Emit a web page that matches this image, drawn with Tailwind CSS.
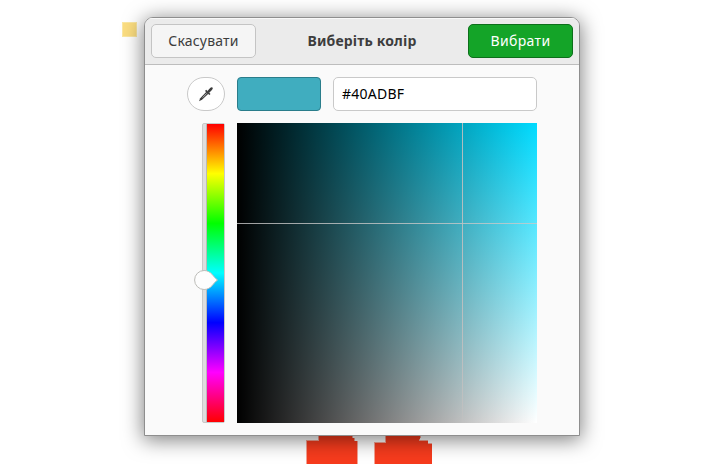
<!DOCTYPE html>
<html lang="uk">
<head>
<meta charset="utf-8">
<title>Виберіть колір</title>
<script src="https://cdn.jsdelivr.net/npm/@tailwindcss/browser@4"></script>
</head>
<body class="relative h-[464px] w-[721px] overflow-hidden bg-white font-['Noto_Sans','Open_Sans',sans-serif] text-[14px]">
  <!-- canvas artwork behind the dialog -->
  <svg class="absolute inset-0" width="721" height="464" shape-rendering="crispEdges">
    <rect x="122" y="22" width="15" height="15" fill="#fbe7a2"/>
    <rect x="123" y="23" width="13" height="13" fill="#fbdd80"/>
    <path d="M306 464V440H318V430H353V438H355V441H358V464ZM374 464V442H385V430H421V438H420V440H428V443H432V464Z" fill="#f5a394"/>
    <path d="M307 464V441H319V430H352V438H354V441H357V464ZM375 464V443H386V430H420V439H419V441H428V444H432V464Z" fill="#f63b1d"/>
  </svg>

  <main class="absolute top-[17px] left-[144px] flex h-[419px] w-[436px] flex-col overflow-hidden rounded-t-[9px] border border-[#8e8e8e] bg-[#fafafa] shadow-[0_3px_20px_1px_rgba(0,0,0,0.5)]">
    <header class="flex h-[47px] shrink-0 items-center justify-between border-b border-[#bdbdbd] bg-[#ebebeb] px-[6px] shadow-[inset_0_1px_0_#f8f8f8]">
      <button class="h-[34px] w-[105px] rounded-[5px] border border-[#c4c4c4] bg-[#f5f5f5] pb-px leading-5 tracking-[0.2px] text-[#3d3d3d]"><span class="whitespace-nowrap">Скасувати</span></button>
      <h1 class="pb-px font-bold tracking-[0.15px] whitespace-nowrap text-[#3d3d3d]">Виберіть колір</h1>
      <button class="h-[34px] w-[105px] rounded-[5px] border border-[#0d6f1b] bg-[#14a428] pb-px leading-5 tracking-[0.35px] text-white"><span class="whitespace-nowrap">Вибрати</span></button>
    </header>

    <div class="flex flex-col gap-3 pt-3 pl-[42px]">
      <div class="flex h-[34px] gap-3">
        <button class="flex w-[38px] items-center justify-center rounded-full border border-[#c9c9c9] bg-white">
          <svg width="16" height="16" viewBox="0 0 16 16">
            <path d="M1 15.2 2.2 12.3 8.4 5.7 10.4 7.7 4 13.7Z" fill="#3d3d3d"/>
            <path d="M4.6 11.6 8.8 7.3" stroke="#c8c8c8" stroke-width=".8"/>
            <path d="M7.6 4.3 11.9 8.5" stroke="#3d3d3d" stroke-width="1.7"/>
            <path d="M9.2 5.2 11.7 2.4Q13.4.6 14.5 1.4 15.5 2.5 13.7 4.2L11 6.9Z" fill="#3d3d3d"/>
          </svg>
        </button>
        <div class="w-[84px] rounded-[4px] border border-[#2a7d8b] bg-[#40adbf]"></div>
        <div class="flex w-[204px] items-center rounded-[5px] border border-[#c9c9c9] bg-white pb-px pl-2 tracking-[0.25px] text-black">#40ADBF</div>
      </div>

      <div class="flex gap-3 pl-[15px]">
        <div class="relative flex h-[300px] w-[23px] rounded-[2px] border border-[#c9c9c9] bg-[#dedede]">
          <div class="ml-[3px] flex-1 border-l border-[#b9b9b9] bg-[linear-gradient(to_bottom,#f00,#ff0_16.667%,#0f0_33.333%,#0ff_50%,#00f_66.667%,#f0f_83.333%,#f00)]"></div>
          <svg class="absolute top-[144px] left-[-10px]" width="26" height="23" viewBox="0 0 26 23">
            <path d="M24.5 12C20.5 9.5 18.5 2.5 11.1 2.5A9.5 9.5 0 0 0 11.1 21.5C18.5 21.5 20.5 14.5 24.5 12Z" fill="#fdfdfd" stroke="#bcbcb8"/>
          </svg>
        </div>
        <div class="relative size-[300px] bg-[linear-gradient(to_right,#000,transparent),linear-gradient(to_bottom,#00dbff,#fff)]">
          <div class="absolute top-[100px] left-0 h-px w-full bg-[#c8c8c8]/80"></div>
          <div class="absolute top-0 left-[225px] h-full w-px bg-[#c0c0c0]/90"></div>
        </div>
      </div>
    </div>
  </main>
</body>
</html>
